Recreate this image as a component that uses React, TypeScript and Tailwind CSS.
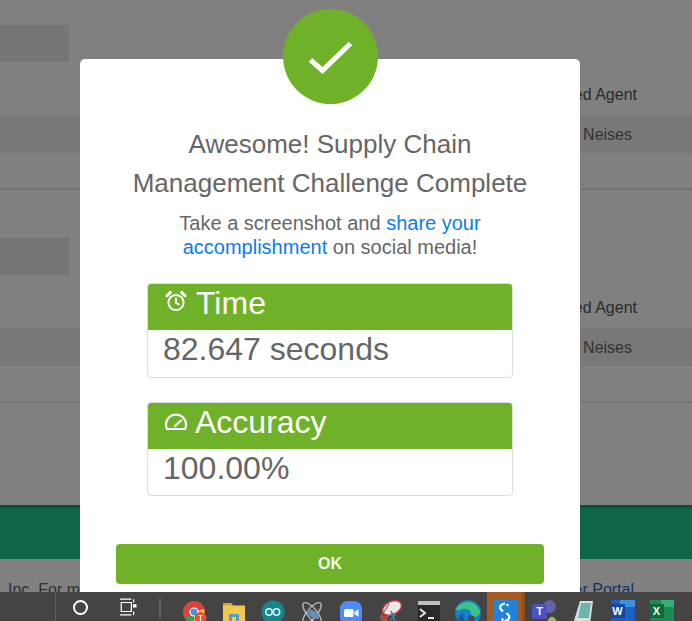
import React from "react";

function AlarmIcon() {
  return (
    <svg viewBox="0 0 24 24" className="h-[24px] w-[24px] shrink-0" fill="none" stroke="currentColor" strokeWidth="2" strokeLinecap="round" strokeLinejoin="round">
      <circle cx="12" cy="13.5" r="7.6" />
      <path d="M12 9.5v4.3l2.8 1.6" />
      <path d="M3 6.6 6.4 3.4" strokeWidth="3" />
      <path d="M21 6.6 17.6 3.4" strokeWidth="3" />
    </svg>
  );
}

function GaugeIcon() {
  return (
    <svg viewBox="0 0 24 24" className="h-[24px] w-[24px] shrink-0" fill="none" stroke="currentColor" strokeWidth="2.2" strokeLinecap="round" strokeLinejoin="round">
      <path d="M3 18h18a10 10 0 1 0-18 0Z" />
      <path d="m11 15 6-5.5" />
    </svg>
  );
}

function ResultCard({ icon, label, value, gap, height, iconTop }: { icon: React.ReactNode; label: string; value: string; gap: string; height: string; iconTop: string }) {
  return (
    <div className={`overflow-hidden rounded border border-[#dddddd] ${height}`}>
      <div className={`flex h-[46px] items-start bg-[#6fb229] pl-[16px] text-[32px] leading-[38px] text-white ${gap}`}>
        <span className={iconTop}>{icon}</span>
        <span>{label}</span>
      </div>
      <div className="pl-[15px] text-[32px] leading-[38px] text-[#666666]">{value}</div>
    </div>
  );
}

function Slot({ children, active }: { children: React.ReactNode; active?: boolean }) {
  return (
    <div className={`flex h-full shrink-0 justify-center pt-[8px] ${active ? "w-[38px] border-r-[3px] border-r-[#8b5020] bg-[#a55a1f]" : "w-[39px]"}`}>
      {children}
    </div>
  );
}

function TaskbarIcons() {
  return (
    <div className="flex h-full pl-[175px]">
      <Slot>
        <svg viewBox="0 0 24 24" className="h-[24px] w-[24px]">
          <circle cx="11" cy="12" r="11" fill="#d9453a" />
          <path d="M11 12 1.5 18A11 11 0 0 0 11 23Z" fill="#3c9a4e" />
          <path d="M11 12v11a11 11 0 0 0 10-14Z" fill="#f5c33b" />
          <circle cx="11" cy="12" r="4.6" fill="#fff" />
          <circle cx="11" cy="12" r="3.4" fill="#4a8fe8" />
          <circle cx="17.5" cy="18" r="6" fill="#e8502a" />
          <path d="M15.5 15.5h4M17.5 15.5v6" stroke="#fff" strokeWidth="1.2" />
        </svg>
      </Slot>
      <Slot>
        <svg viewBox="0 0 24 24" className="h-[24px] w-[24px]">
          <path d="M1 3h8l2 2.5h12V24H1Z" fill="#f2c94e" />
          <path d="M1 3h8l2 2.5H1Z" fill="#d9a52c" />
          <path d="M7 14h10v10H7Z" fill="#4f9fc9" />
          <path d="M10 17h4v7h-4Z" fill="#f2c94e" />
        </svg>
      </Slot>
      <Slot>
        <svg viewBox="0 0 24 24" className="h-[24px] w-[24px]">
          <circle cx="12" cy="12" r="11.5" fill="#15878c" />
          <circle cx="8" cy="12" r="3.2" fill="none" stroke="#d5eeee" strokeWidth="1.5" />
          <circle cx="15.5" cy="12" r="3.2" fill="none" stroke="#d5eeee" strokeWidth="1.5" />
        </svg>
      </Slot>
      <Slot>
        <svg viewBox="0 0 24 24" className="h-[26px] w-[26px]" fill="none" stroke="#b9bec4" strokeWidth="1.2">
          <ellipse cx="12" cy="12" rx="12" ry="4.5" transform="rotate(50 12 12)" />
          <ellipse cx="12" cy="12" rx="12" ry="4.5" transform="rotate(-50 12 12)" />
          <ellipse cx="13" cy="13" rx="6" ry="2.4" transform="rotate(30 13 13)" fill="#5f8fc4" stroke="#7c8894" />
        </svg>
      </Slot>
      <Slot>
        <svg viewBox="0 0 24 24" className="h-[26px] w-[24px]">
          <rect x="1" y="0" width="22" height="24" rx="8" fill="#4d8cf5" />
          <rect x="5" y="8" width="9.5" height="8" rx="1.5" fill="#fff" />
          <path d="m15.5 11 4-2.8v7.6l-4-2.8Z" fill="#fff" />
        </svg>
      </Slot>
      <Slot>
        <svg viewBox="0 0 24 24" className="h-[24px] w-[24px]">
          <ellipse cx="14" cy="8" rx="10" ry="6.5" transform="rotate(-25 14 8)" fill="#ece6e6" stroke="#c33a3a" strokeWidth="1.5" />
          <path d="M2 18 11 4M3 20 16 13" stroke="#9a6a6a" strokeWidth="1.3" />
          <circle cx="6" cy="19" r="3.5" fill="#b04a4a" />
          <path d="M13 11 17 21M12 20l6-6" stroke="#3d7fb5" strokeWidth="1.6" />
        </svg>
      </Slot>
      <Slot>
        <svg viewBox="0 0 24 24" className="h-[24px] w-[24px]">
          <rect x="1" y="1" width="22" height="23" fill="#2a2a2a" />
          <rect x="1" y="1" width="22" height="4" fill="#bdbdbd" />
          <path d="m3 9 5 4-5 4" fill="none" stroke="#e4e4e4" strokeWidth="2" />
          <path d="M11 18h6" stroke="#e4e4e4" strokeWidth="2" />
        </svg>
      </Slot>
      <Slot>
        <svg viewBox="0 0 24 24" className="h-[26px] w-[26px]">
          <circle cx="12" cy="12" r="12" fill="#1a7fc9" />
          <path d="M1 8C5 1 18-2 23 10c1 5-5 7-9 5 3-5-3-9-9-6-3 1-3 1-4-1Z" fill="#3bc48a" />
          <path d="M8 12c-2 6 4 11 11 9 1 0 2-1 1 0-5 4-13 3-17-3 0-3 3-6 5-6Z" fill="#0f5ea8" />
          <circle cx="15" cy="17" r="3" fill="#484848" />
        </svg>
      </Slot>
      <Slot active>
        <svg viewBox="0 0 24 24" className="h-[24px] w-[24px]">
          <rect width="24" height="24" fill="#1f84dc" />
          <path d="M12 3.5C8 4 6.5 6.5 7.5 9l2.5 2.5M13.5 13l2.5 2.5c1 2.5-.5 5-4.5 5.5" fill="none" stroke="#fff" strokeWidth="2.2" />
          <circle cx="14.5" cy="5" r="1.3" fill="#fff" />
          <circle cx="9.5" cy="19.5" r="1.3" fill="#fff" />
        </svg>
      </Slot>
      <Slot>
        <div className="relative h-[23px] w-[25px]">
          <span className="absolute right-[1px] top-[0px] h-[13px] w-[13px] rounded-full bg-[#6264a7]" />
          <span className="absolute left-0 top-[4px] flex h-[15px] w-[15px] items-center justify-center rounded-[2px] bg-[#4b53bc] text-[11px] font-bold text-white">T</span>
          <span className="absolute bottom-[-3px] right-0 h-[10px] w-[10px] rounded-full border border-[#444444] bg-[#8cc63f]" />
        </div>
      </Slot>
      <Slot>
        <svg viewBox="0 0 24 24" className="h-[24px] w-[24px]">
          <path d="M8 1h13l-3 23H1Z" fill="#cfe3e3" />
          <path d="M9 3h10l-2 15H6Z" fill="#6fb3ad" />
        </svg>
      </Slot>
      <Slot>
        <div className="relative h-[21px] w-[24px] bg-[#1f5fbf]">
          <span className="absolute right-0 top-0 h-[7px] w-[15px] bg-[#3f90e0]" />
          <span className="absolute left-0 top-[4px] flex h-[14px] w-[14px] items-center justify-center bg-[#15479c] text-[11px] font-bold leading-none text-white">W</span>
        </div>
      </Slot>
      <Slot>
        <div className="relative h-[21px] w-[24px] bg-[#1d8a55]">
          <span className="absolute right-0 top-0 h-[7px] w-[13px] bg-[#33b077]" />
          <span className="absolute left-0 top-[4px] flex h-[14px] w-[14px] items-center justify-center bg-[#0f6b3c] text-[11px] font-bold leading-none text-white">X</span>
        </div>
      </Slot>
    </div>
  );
}

function BackgroundBlock() {
  return (
    <div className="h-[213px]">
      <div className="h-[25px]" />
      <div className="h-[37px] w-[69px] bg-[#747575]" />
      <div className="flex h-[53px] items-end justify-end pb-[10px] pr-[55px] text-[16px] leading-[20px] text-[#2a2a2a]">
        Certified Agent
      </div>
      <div className="flex h-[38px] items-center justify-end bg-[#787878] pr-[60px] pt-[1px] text-[16px] text-[#333333]">
        Neises
      </div>
      <div className="h-[37px] border-b-2 border-[#757575]" />
    </div>
  );
}

export default function App() {
  return (
    <div className="relative h-[621px] w-[692px] overflow-hidden bg-[#808080] font-['Liberation_Sans',sans-serif]">
      {/* page behind the overlay */}
      <BackgroundBlock />
      <BackgroundBlock />
      <div className="h-[79px]" />
      <div className="h-[54px] border-t-[3px] border-[#0b4f37] bg-[#0f6647]" />
      <div className="flex justify-between pl-[8px] pr-[58px] pt-[21px] text-[16px] leading-[20px]">
        <span className="text-[#2f2f2f]">Inc. For more</span>
        <span className="text-[#14335c]">Customer Portal</span>
      </div>

      {/* modal */}
      <div className="absolute left-[80px] top-[59px] h-[600px] w-[500px] rounded-[5px] bg-white px-[36px] text-center">
        <div className="absolute left-[203px] top-[-50px] flex h-[95px] w-[95px] items-center justify-center rounded-full bg-[#6fb229]">
          <svg viewBox="0 0 48 48" className="h-[48px] w-[48px]" fill="none" stroke="#fff" strokeWidth="5">
            <path d="m3.5 27 12 10.5 28-27" />
          </svg>
        </div>
        <h2 className="pt-[66px] text-[26px] font-normal leading-[39px] text-[#666666]">
          Awesome! Supply Chain
          <br />
          Management Challenge Complete
        </h2>
        <p className="mt-[8px] text-[20px] leading-[24px] text-[#666666]">
          Take a screenshot and <span className="text-[#0a7cf0]">share your</span>
          <br />
          <span className="text-[#0a7cf0]">accomplishment</span> on social media!
        </p>
        <div className="mx-[31px] mt-[24px] flex flex-col gap-[24px] text-left">
          <ResultCard icon={<AlarmIcon />} label="Time" value="82.647 seconds" gap="gap-[8px]" height="h-[95px]" iconTop="mt-[5px]" />
          <ResultCard icon={<GaugeIcon />} label="Accuracy" value="100.00%" gap="gap-[7px]" height="h-[94px]" iconTop="mt-[8px]" />
        </div>
        <button className="mt-[48px] h-[40px] w-full rounded-[4px] bg-[#6fb229] text-[16px] font-bold text-[#f4f8ee]">OK</button>
      </div>

      {/* windows taskbar */}
      <div className="absolute bottom-0 left-0 h-[29px] w-full overflow-hidden bg-[#444444]">
        <div className="absolute left-[55px] top-0 h-full w-px bg-[#5c5c5c]" />
        <div className="absolute left-[73px] top-[8px] h-[15px] w-[15px] rounded-full border-[2.5px] border-white" />
        <svg viewBox="0 0 16 16" className="absolute left-[119px] top-[6px] h-[18px] w-[18px]" fill="none" stroke="#fff" strokeWidth="1.1">
          <path d="M1 1h10M1 15h10M2 4h9v8H2ZM13 1v3M13 12v3" />
          <path d="M13 6h2v2h-2Z" fill="#fff" />
        </svg>
        <div className="absolute left-[159px] top-[6px] h-[20px] w-[2px] bg-[#5f5f5f]" />
        <div className="absolute left-0 top-0 h-full w-full">
          <TaskbarIcons />
        </div>
      </div>
    </div>
  );
}
